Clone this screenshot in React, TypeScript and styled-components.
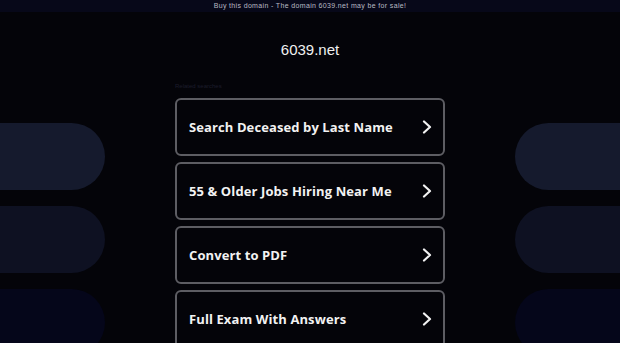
import React from "react";
import styled, { createGlobalStyle } from "styled-components";

const GlobalStyle = createGlobalStyle`
  html, body {
    margin: 0;
    padding: 0;
    background: #040409;
    height: 100%;
    overflow: hidden;
  }
`;

const searches = [
  "Search Deceased by Last Name",
  "55 & Older Jobs Hiring Near Me",
  "Convert to PDF",
  "Full Exam With Answers",
];

const pillColors = ["#151a2d", "#0e1122", "#05061a"];

const Chevron: React.FC = () => (
  <svg width="10" height="14" viewBox="0 0 10 14" fill="none">
    <polyline
      points="2,1.5 8,7 2,12.5"
      stroke="#f2f2f2"
      strokeWidth="2.2"
      strokeLinecap="round"
      strokeLinejoin="round"
    />
  </svg>
);

const App: React.FC = () => {
  return (
    <Page>
      <GlobalStyle />
      <TopBar>Buy this domain - The domain 6039.net may be for sale!</TopBar>
      <Body>
        <SideColumn>
          {pillColors.map((c) => (
            <Pill key={c} $color={c} $side="left" />
          ))}
        </SideColumn>
        <Main>
          <Title>6039.net</Title>
          <Label>Related searches</Label>
          <List>
            {searches.map((s) => (
              <Card key={s}>
                <span>{s}</span>
                <Chevron />
              </Card>
            ))}
          </List>
        </Main>
        <SideColumn $right>
          {pillColors.map((c) => (
            <Pill key={c} $color={c} $side="right" />
          ))}
        </SideColumn>
      </Body>
    </Page>
  );
};

export default App;

const Page = styled.div`
  width: 620px;
  height: 343px;
  background: #040409;
  overflow: hidden;
  display: flex;
  flex-direction: column;
`;

const TopBar = styled.div`
  height: 12px;
  flex-shrink: 0;
  background: #070819;
  color: #b9bac4;
  font-family: "Liberation Sans", Arial, sans-serif;
  font-size: 7px;
  letter-spacing: 0.35px;
  line-height: 12px;
  text-align: center;
`;

const Body = styled.div`
  display: grid;
  grid-template-columns: 175px 270px 175px;
  flex: 1;
`;

const SideColumn = styled.div<{ $right?: boolean }>`
  display: flex;
  flex-direction: column;
  align-items: ${(p) => (p.$right ? "flex-end" : "flex-start")};
  gap: 16px;
  padding-top: 111px;
`;

const Pill = styled.div<{ $color: string; $side: "left" | "right" }>`
  width: 105px;
  height: 67px;
  flex-shrink: 0;
  background: ${(p) => p.$color};
  border-radius: ${(p) => (p.$side === "left" ? "0 34px 34px 0" : "34px 0 0 34px")};
`;

const Main = styled.div`
  display: flex;
  flex-direction: column;
`;

const Title = styled.h1`
  margin: 29px 0 0;
  color: #f0f0f0;
  font-family: "Liberation Sans", Arial, sans-serif;
  font-weight: normal;
  font-size: 15px;
  line-height: 18px;
  text-align: center;
`;

const Label = styled.div`
  margin-top: 23px;
  color: #1c1d2c;
  font-family: "Liberation Sans", Arial, sans-serif;
  font-size: 6px;
  line-height: 8px;
`;

const List = styled.div`
  display: flex;
  flex-direction: column;
  gap: 6px;
  margin-top: 8px;
`;

const Card = styled.div`
  box-sizing: border-box;
  height: 58px;
  flex-shrink: 0;
  border: 2px solid #5d5d63;
  border-radius: 6px;
  background: #040409;
  display: flex;
  align-items: center;
  justify-content: space-between;
  padding: 0 11px 0 12px;
  color: #f2f2f2;
  font-family: "Open Sans", "DejaVu Sans", sans-serif;
  font-weight: 700;
  font-size: 13px;
  letter-spacing: 0.1px;
`;
